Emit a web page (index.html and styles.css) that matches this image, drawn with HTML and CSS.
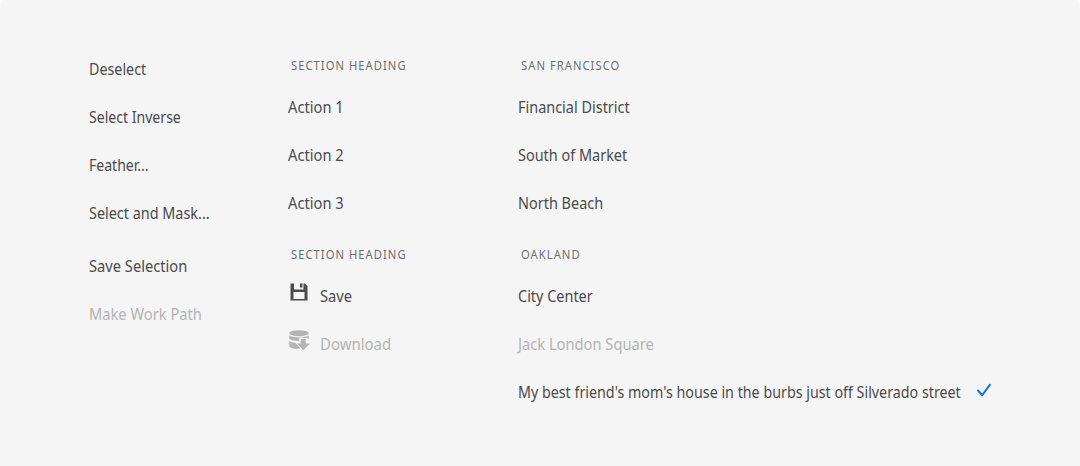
FILE: index.html
```html
<!DOCTYPE html>
<html lang="en">
<head>
<meta charset="utf-8">
<title>Menus</title>
<link rel="stylesheet" href="styles.css">
</head>
<body>
<main class="canvas">
  <ul class="menu menu-selection">
    <li class="item"><span class="label t-deselect">Deselect</span></li>
    <li class="item"><span class="label t-inverse">Select Inverse</span></li>
    <li class="item"><span class="label t-feather">Feather...</span></li>
    <li class="item"><span class="label t-mask">Select and Mask...</span></li>
    <li class="item divided"><span class="label t-wide">Save Selection</span></li>
    <li class="item disabled"><span class="label t-wide">Make Work Path</span></li>
  </ul>
  <ul class="menu menu-actions">
    <li class="heading"><span class="label">Section Heading</span></li>
    <li class="item"><span class="label t-wide">Action 1</span></li>
    <li class="item"><span class="label t-wide">Action 2</span></li>
    <li class="item"><span class="label t-wide">Action 3</span></li>
    <li class="heading next"><span class="label">Section Heading</span></li>
    <li class="item">
      <svg class="icon" viewBox="0 0 22 22"><path fill-rule="evenodd" d="M2.500 2.500H6V8.500h9.500V2.500h1.300L19.500 5.200v14.300H2.500zM5.500 11V18h11v-7zM12 2.500h2.500v4H12z"/></svg>
      <span class="label t-wide">Save</span>
    </li>
    <li class="item disabled">
      <svg class="icon" viewBox="0 0 22 22"><ellipse cx="11" cy="4.200" rx="9.700" ry="3"/><path d="M1.300 6.300c3 2.700 16.400 2.700 19.400 0v3.500h-1.500V8.700h-8v3.200C7 11.900 3 11.300 1.300 10zM1.300 12c1.700 1.200 4 1.700 6.300 1.900l4.200 4.800v1.100C6 20 2.500 19 1.300 17.500zM12.700 10h5v4.500h4.300l-6.700 6.800-6.300-6.800h3.700z"/></svg>
      <span class="label t-download">Download</span>
    </li>
  </ul>
  <ul class="menu menu-places">
    <li class="heading"><span class="label">San Francisco</span></li>
    <li class="item"><span class="label">Financial District</span></li>
    <li class="item"><span class="label">South of Market</span></li>
    <li class="item"><span class="label">North Beach</span></li>
    <li class="heading next"><span class="label">Oakland</span></li>
    <li class="item"><span class="label">City Center</span></li>
    <li class="item disabled"><span class="label t-wide">Jack London Square</span></li>
    <li class="item"><span class="label t-house">My best friend's mom's house in the burbs just off Silverado street</span>
      <svg class="check" viewBox="0 0 16 16"><path d="M2 8.500l4.300 4.700L14 2.700"/></svg>
    </li>
  </ul>
</main>
</body>
</html>
```
FILE: styles.css
```css
body {
  margin: 0;
  background: #fff;
  font-family: "Noto Sans", "Open Sans", sans-serif;
}
.canvas {
  box-sizing: border-box;
  height: 466px;
  padding: 45px 0 0 89px;
  display: flex;
  background: #f5f5f5;
  border-radius: 6px 6px 0 0;
}
.menu {
  margin: 0;
  padding: 0;
  list-style: none;
}
.menu-selection { width: 199px; }
.menu-actions { width: 230px; }
.item {
  display: flex;
  align-items: center;
  height: 48px;
  color: #4b4b4b;
  fill: #4b4b4b;
  font-size: 16px;
  line-height: 24px;
  white-space: nowrap;
}
.label {
  display: inline-block;
  transform: scaleX(0.903);
  transform-origin: 0 50%;
}
.t-deselect { transform: scaleX(0.893); }
.t-inverse { transform: scaleX(0.88); }
.t-feather { transform: scaleX(0.877); }
.t-mask { transform: scaleX(0.9); }
.t-wide { transform: scaleX(0.917); }
.t-download { transform: scaleX(0.935); }
.t-house { width: 444px; transform: scaleX(0.8925); }
.divided { margin-top: 5px; }
.disabled { color: #b3b3b3; fill: #b3b3b3; }
.heading {
  height: 38px;
  padding-left: 3px;
  color: #6e6e6e;
  font-size: 12px;
  line-height: 41px;
  letter-spacing: 1.1px;
  text-transform: uppercase;
}
.heading .label { transform: scaleX(0.935); }
.next { height: 45px; line-height: 55px; }
.icon {
  width: 22px;
  height: 22px;
  margin: -8px 10px 0 0;
}
.check {
  flex: none;
  width: 16px;
  height: 16px;
  margin: -5px 0 0 14px;
  fill: none;
  stroke: #1473e6;
  stroke-width: 2;
  stroke-linecap: round;
  stroke-linejoin: round;
}
```
